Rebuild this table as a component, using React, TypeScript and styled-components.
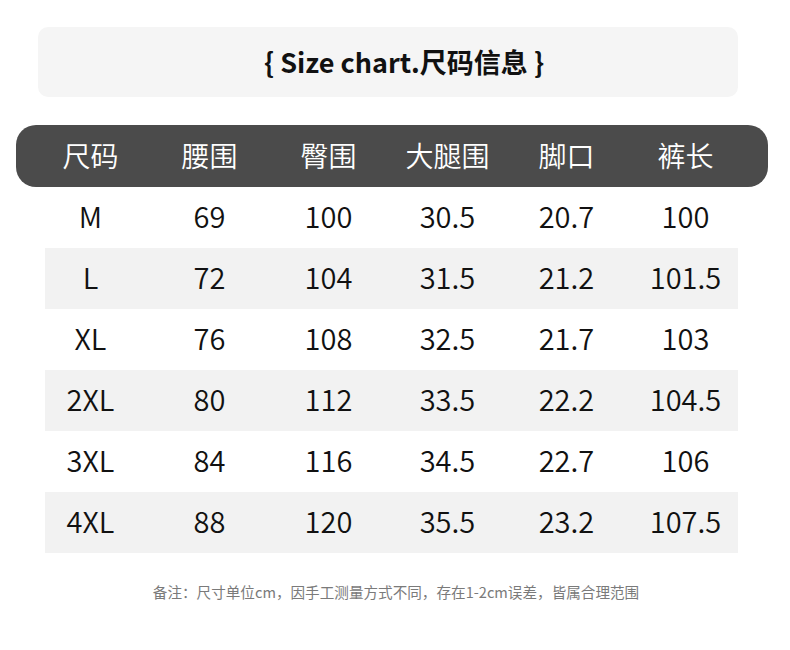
import React from "react";
import styled, { createGlobalStyle } from "styled-components";

const GlobalStyle = createGlobalStyle`
  body {
    margin: 0;
    background: #ffffff;
    font-family: "Noto Sans CJK SC", "Noto Sans", sans-serif;
  }
`;

const Page = styled.div`
  width: 790px;
  height: 650px;
  padding-top: 27px;
  box-sizing: border-box;
  background: #ffffff;
`;

const TitleBox = styled.div`
  margin-left: 38px;
  width: 700px;
  height: 70px;
  border-radius: 10px;
  background: #f5f5f5;
  display: flex;
  align-items: center;
  justify-content: center;
  padding-left: 32px;
  box-sizing: border-box;
`;

const Title = styled.h1`
  margin: 0;
  padding-bottom: 2px;
  font-size: 27px;
  font-weight: 700;
  color: #111111;
  line-height: 1;
`;

const HeaderBar = styled.div`
  margin-top: 28px;
  margin-left: 16px;
  width: 752px;
  height: 62px;
  border-radius: 20px;
  background: #4b4b4b;
  padding-left: 15px;
  box-sizing: border-box;
  display: grid;
  grid-template-columns: repeat(6, 119px);
  align-items: center;
`;

const HeadCell = styled.div`
  text-align: center;
  color: #ffffff;
  font-size: 28px;
  font-weight: 350;
  line-height: 1;
  padding-bottom: 3px;
`;

const Body = styled.div`
  display: flex;
  flex-direction: column;
`;

const Row = styled.div<{ $shaded: boolean }>`
  margin-left: 45px;
  width: 693px;
  height: 61px;
  background: ${(p) => (p.$shaded ? "#f2f2f2" : "transparent")};
`;

const Cells = styled.div`
  margin-left: -14px;
  height: 100%;
  display: grid;
  grid-template-columns: repeat(6, 119px);
  align-items: center;
`;

const Cell = styled.div`
  text-align: center;
  color: #111111;
  font-size: 29px;
  font-weight: 350;
  line-height: 1;
  padding-bottom: 4px;
`;

const Note = styled.p`
  margin: 29px 0 0;
  text-align: center;
  padding-left: 2px;
  font-size: 14.6px;
  line-height: 20px;
  color: #7a7a7a;
`;

const headers = ["尺码", "腰围", "臀围", "大腿围", "脚口", "裤长"];

const rows = [
  ["M", "69", "100", "30.5", "20.7", "100"],
  ["L", "72", "104", "31.5", "21.2", "101.5"],
  ["XL", "76", "108", "32.5", "21.7", "103"],
  ["2XL", "80", "112", "33.5", "22.2", "104.5"],
  ["3XL", "84", "116", "34.5", "22.7", "106"],
  ["4XL", "88", "120", "35.5", "23.2", "107.5"],
];

export default function App() {
  return (
    <>
      <GlobalStyle />
      <Page>
        <TitleBox>
          <Title>{"{ Size chart.尺码信息 }"}</Title>
        </TitleBox>
        <HeaderBar>
          {headers.map((h) => (
            <HeadCell key={h}>{h}</HeadCell>
          ))}
        </HeaderBar>
        <Body>
          {rows.map((r, i) => (
            <Row key={r[0]} $shaded={i % 2 === 1}>
              <Cells>
                {r.map((v, j) => (
                  <Cell key={j}>{v}</Cell>
                ))}
              </Cells>
            </Row>
          ))}
        </Body>
        <Note>备注：尺寸单位cm，因手工测量方式不同，存在1-2cm误差，皆属合理范围</Note>
      </Page>
    </>
  );
}
